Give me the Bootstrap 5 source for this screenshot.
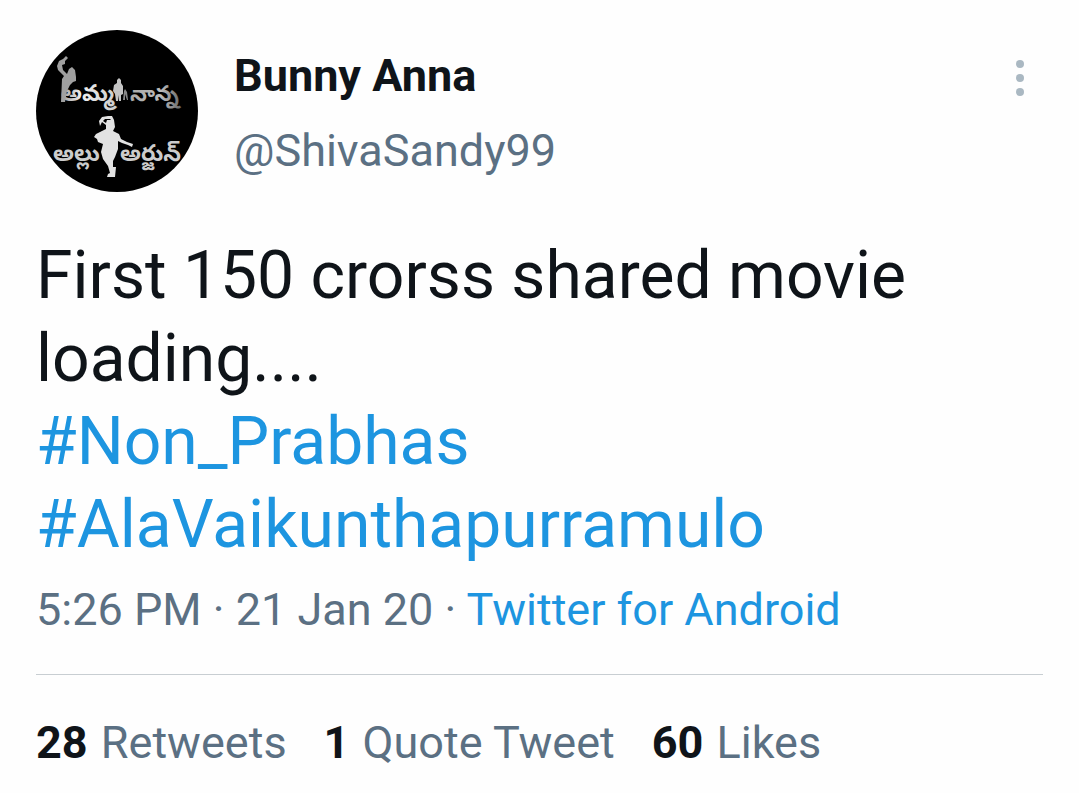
<!DOCTYPE html>
<html lang="en">
<head>
<meta charset="utf-8">
<meta name="viewport" content="width=device-width, initial-scale=1">
<title>Bunny Anna on Twitter</title>
<link href="https://cdn.jsdelivr.net/npm/bootstrap@5.3.0/dist/css/bootstrap.min.css" rel="stylesheet">
<style>
  body { font-family: Roboto, "Liberation Sans", sans-serif; color: #0f1419; background: #fefefe; font-size: 45px; line-height: 52px; }
  a { color: #1d95e0; text-decoration: none; }
  .tweet { padding: 30px 36px 24px; }
  .avatar { width: 162px; height: 162px; }
  .author { margin-left: 36px; padding-top: 20px; }
  .handle { margin-top: 23px; }
  .muted, .muted:hover { color: #5b7083; }
  .more { width: 46px; height: 48px; margin-top: 24px; }
  .tweet-text { font-size: 66px; line-height: 83px; margin-top: 42px; }
  .meta { margin-top: 18px; }
  .stats { margin-top: 38px; padding-top: 42px; border-top: 1px solid #c8ced2; gap: 8px 37px; }
  .stats strong { color: #0f1419; margin-right: 2px; }
</style>
</head>
<body>
<article class="tweet">
  <header class="d-flex align-items-start">
    <svg class="avatar flex-shrink-0" viewBox="0 0 162 162" role="img" aria-label="Profile picture">
      <defs>
        <linearGradient id="fade"><stop offset="0" stop-color="#999"/><stop offset=".35" stop-color="#eee"/><stop offset="1" stop-color="#ccc"/></linearGradient>
        <linearGradient id="fade-out"><stop offset="0" stop-color="#aaa"/><stop offset=".6" stop-color="#bbb"/><stop offset="1" stop-color="#666"/></linearGradient>
      </defs>
      <circle cx="81" cy="81" r="81" fill="#000"/>
      <g font-family="'Noto Sans Telugu', sans-serif" font-weight="700">
        <text x="25" y="71" font-size="23" fill="url(#fade)">అమ్మ</text>
        <text x="94" y="71" font-size="22" fill="url(#fade-out)">నాన్న</text>
        <text x="17" y="131" font-size="23" fill="#ccc">అల్లు</text>
        <text x="84" y="131" font-size="23" fill="#ccc">అర్జున్</text>
      </g>
      <path fill="#a0a0a0" d="M25 72L26 49L28 46L22 40L21 36L23 31L27 29L30 26L32 28L29 31L29 34L26 35L27 40L31 44L33 39L36 37L39 40L40 47L40 51L37 52L34 55L31 61L29 72Z"/>
      <path fill="#c4c4c4" d="M81 53L81 50L83 48L85 50L85 53L87 56L87 64L85 65L85 71L83 71L83 65L82 71L80 71L79 64L77 61L78 55Z"/>
      <path fill="#888" d="M87 70L88 61L89 59L91 62L92 70L91 70L89 64L89 70Z"/>
      <path fill="#e2e2e2" fill-rule="evenodd" d="M64 96L63 91L66 87L72 86L76 86L78 90L79 97L77 101L83 104L85 109L91 112L97 114L96 117L92 115L86 113L82 111L82 119L79 127L77 131L77 137L80 137L79 147L71 147L72 144L74 143L72 136L67 129L65 122L67 114L62 112L61 109L58 107L60 104L66 101L70 99L70 95L66 92ZM67 91L70 93L71 90L75 90L74 89L69 89Z"/>
    </svg>
    <div class="author flex-grow-1">
      <div class="fw-bold">Bunny Anna</div>
      <a class="handle muted d-inline-block" href="#">@ShivaSandy99</a>
    </div>
    <button class="more btn p-0 border-0 d-flex justify-content-center align-items-center" type="button" aria-label="More options">
      <svg width="8" height="36" viewBox="0 0 8 36" fill="#aab8c2"><circle cx="4" cy="4" r="4"/><circle cx="4" cy="18" r="4"/><circle cx="4" cy="32" r="4"/></svg>
    </button>
  </header>
  <div class="tweet-text">
    First 150 crorss shared movie loading....<br>
    <a href="#">#Non_Prabhas</a><br>
    <a href="#">#AlaVaikunthapurramulo</a>
  </div>
  <div class="meta muted">5:26 PM · 21 Jan 20 · <a href="#">Twitter for Android</a></div>
  <footer class="stats d-flex flex-wrap">
    <a class="muted" href="#"><strong>28</strong> Retweets</a>
    <a class="muted" href="#"><strong>1</strong> Quote Tweet</a>
    <a class="muted" href="#"><strong>60</strong> Likes</a>
  </footer>
</article>
<script src="https://cdn.jsdelivr.net/npm/bootstrap@5.3.0/dist/js/bootstrap.bundle.min.js"></script>
</body>
</html>
